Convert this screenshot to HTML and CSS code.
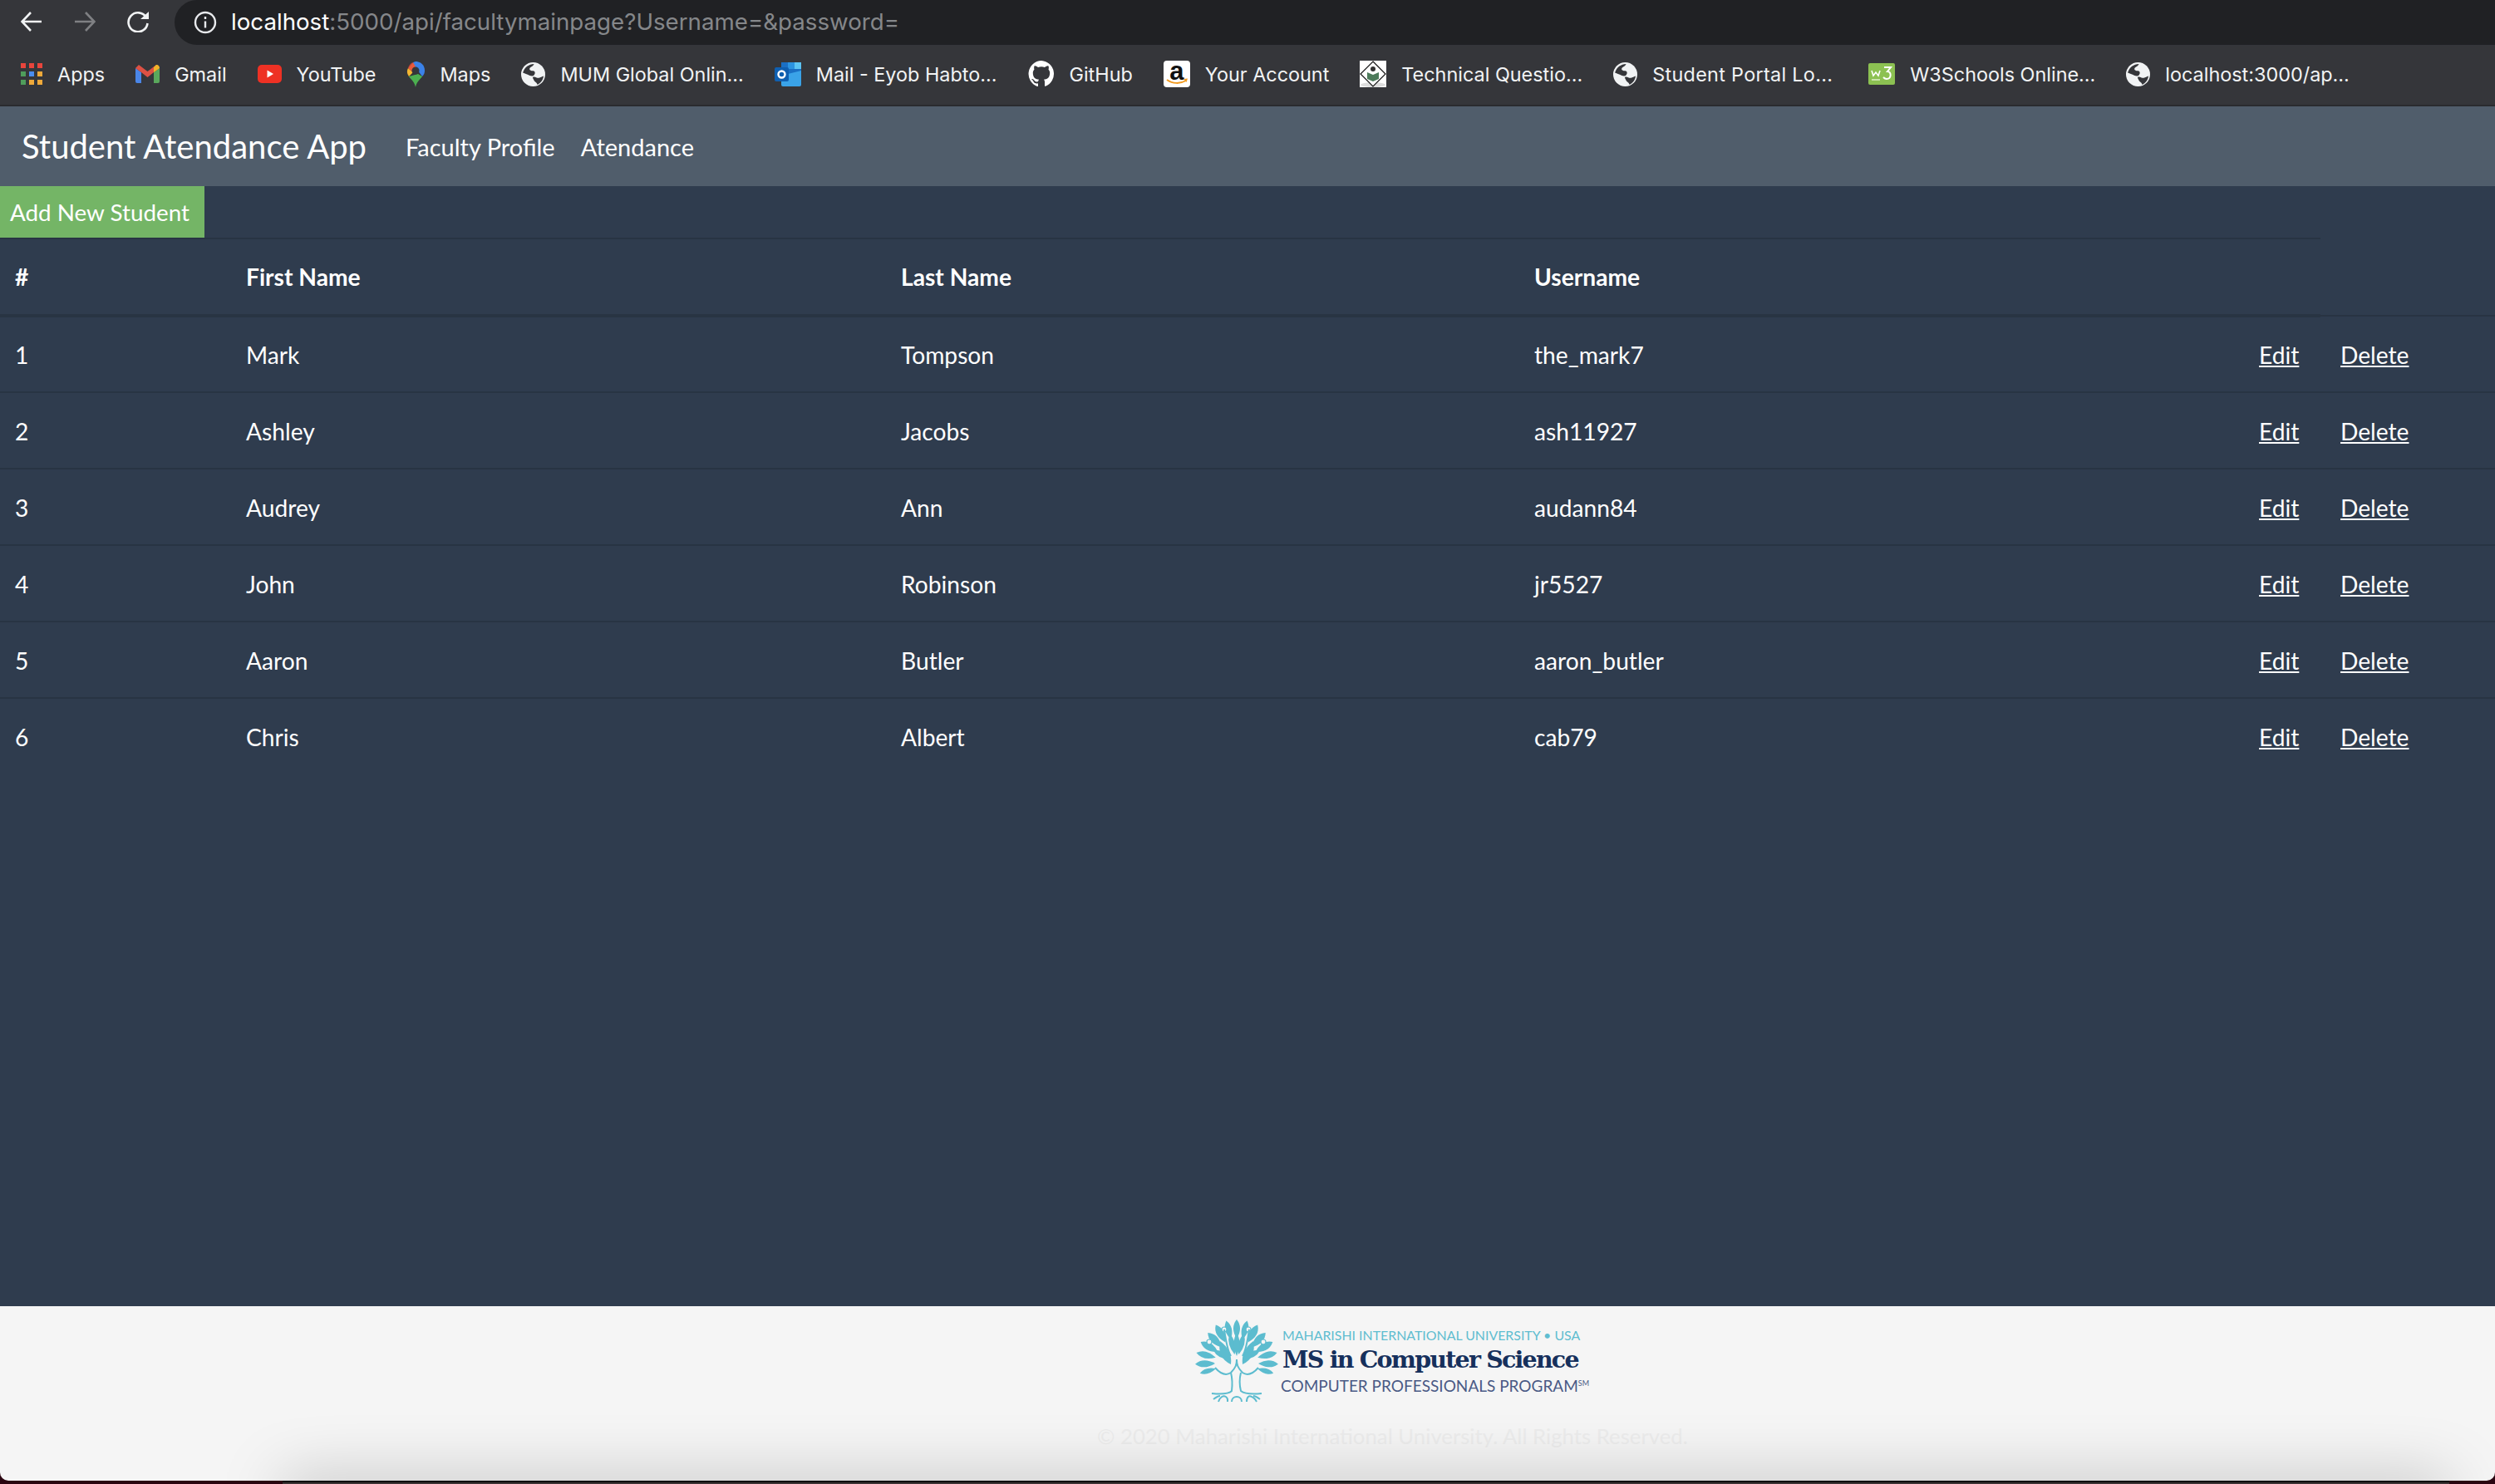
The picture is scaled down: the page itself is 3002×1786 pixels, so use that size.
FILE: index.html
```html
<!DOCTYPE html>
<html lang="en">
<head>
<meta charset="UTF-8">
<title>Student Atendance App</title>
<link rel="stylesheet" href="styles.css">
</head>
<body>
<div class="toolbar">
  <div class="nav-buttons">
    <svg class="tool-icon" viewBox="0 0 26 26"><path d="M25 13H2M12 2 1.5 13 12 24"/></svg>
    <svg class="tool-icon dim" viewBox="0 0 26 26"><path d="M1 13h23M14 2l10.500 11L14 24"/></svg>
    <svg class="tool-icon reload" viewBox="0 0 28 26"><path d="M23 8a11.500 11.500 0 1 0 1.500 7"/><path class="solid" d="M16 10 26 1v9z"/></svg>
  </div>
  <div class="address">
    <svg class="info-icon" viewBox="0 0 28 28"><circle cx="14" cy="14" r="12"/><path d="M14 12.500v8M14 7v3"/></svg>
    <span class="url">localhost<span class="url-rest">:5000/api/facultymainpage?Username=&amp;password=</span></span>
  </div>
</div>

<div class="bookmarks">
  <div class="bookmark">
    <svg class="bm-icon apps" viewBox="0 0 26 27">
      <rect x="0" y="0" width="6" height="6" fill="#e8453c"/><rect x="10" y="0" width="6" height="6" fill="#e8453c"/><rect x="20" y="0" width="6" height="6" fill="#e8453c"/>
      <rect x="0" y="10" width="6" height="6" fill="#4f9d5b"/><rect x="10" y="10" width="6" height="6" fill="#4a8df0"/><rect x="20" y="10" width="6" height="6" fill="#eea93a"/>
      <rect x="0" y="20" width="6" height="6" fill="#4f9d5b"/><rect x="10" y="20" width="6" height="6" fill="#eea93a"/><rect x="20" y="20" width="6" height="6" fill="#eea93a"/>
    </svg>
    <span>Apps</span>
  </div>
  <div class="bookmark">
    <svg class="bm-icon gmail" viewBox="0 0 29 22">
      <path fill="#4a86e8" d="M0 4v16a2 2 0 0 0 2 2h5V9z"/>
      <path fill="#5aa85c" d="M29 4v16a2 2 0 0 1-2 2h-5V9z"/>
      <path fill="#dd5144" d="M0 4l7 5 7.500 6L22 9l7-5-4-4-10.500 8L4 0z"/>
      <path fill="#f0b429" d="M22 3l3-3c2-.5 4 1.500 4 4l-7 5z"/>
    </svg>
    <span>Gmail</span>
  </div>
  <div class="bookmark">
    <svg class="bm-icon youtube" viewBox="0 0 29 22">
      <rect width="29" height="22" rx="5" fill="#ee3124"/>
      <path fill="#fff" d="M11.500 6.500 19 11l-7.500 4.500z"/>
    </svg>
    <span>YouTube</span>
  </div>
  <div class="bookmark">
    <svg class="bm-icon maps" viewBox="0 0 22 31">
      <path fill="#4caf50" d="M3 18c3 4 7 7 8 13 1-6 5-9 8-13z"/>
      <path fill="#f4b731" d="M2 8 8 13l-5 5C1 15 0 12 2 8z"/>
      <path fill="#db4437" d="M2 8 8 1c-3 1-5 4-6 7z"/>
      <path fill="#e85a3c" d="M2 8l6 5 5-9-5-3z"/>
      <path fill="#3b82e8" d="M11 0c6 0 11 4 11 11 0 3-1 5-3 7l-6-8-5-9z"/>
      <path fill="#4caf50" d="M3 18 14 15l5 3-8 7z"/>
      <circle cx="11" cy="11" r="4.500" fill="#35363a"/>
    </svg>
    <span>Maps</span>
  </div>
  <div class="bookmark">
    <svg class="bm-icon globe" viewBox="0 0 28 28"><use href="#globe-shape"/></svg>
    <span>MUM Global Onlin...</span>
  </div>
  <div class="bookmark">
    <svg class="bm-icon outlook" viewBox="0 0 32 29">
      <path fill="#1a6fc4" d="M8 0h24v16H8z"/>
      <path fill="#5cc4f2" d="M24 0h8v8h-8z"/>
      <path fill="#2b93e0" d="M16 0h8v8h-8z"/>
      <path fill="#3aa3e8" d="M8 16l24-6v17a2 2 0 0 1-2 2H10a2 2 0 0 1-2-2z"/>
      <rect x="0" y="6" width="17" height="17" rx="2" fill="#0f5fb0"/>
      <circle cx="8.500" cy="14.500" r="4" fill="none" stroke="#fff" stroke-width="2.400"/>
    </svg>
    <span>Mail - Eyob Habto...</span>
  </div>
  <div class="bookmark">
    <svg class="bm-icon github" viewBox="0 0 32 32">
      <path fill="#fff" d="M16 0a16 16 0 0 0-5 31c.8.100 1-.3 1-.8v-3c-4.500 1-5.400-2-5.400-2-.7-1.800-1.800-2.300-1.800-2.300-1.400-1 .1-1 .1-1 1.600.1 2.500 1.700 2.500 1.700 1.400 2.500 3.800 1.800 4.700 1.400.1-1 .6-1.800 1-2.200-3.600-.4-7.300-1.800-7.300-8 0-1.800.6-3.200 1.700-4.300-.2-.4-.7-2 .1-4.300 0 0 1.400-.4 4.400 1.700a15 15 0 0 1 8 0c3-2.100 4.400-1.700 4.400-1.700.9 2.300.3 3.900.1 4.300 1 1.100 1.700 2.500 1.700 4.300 0 6.200-3.700 7.600-7.300 8 .6.500 1.100 1.400 1.100 2.900v4.300c0 .5.200.9 1 .8A16 16 0 0 0 16 0z"/>
    </svg>
    <span>GitHub</span>
  </div>
  <div class="bookmark">
    <div class="amazon">
      <span class="amazon-a">a</span>
      <svg class="amazon-smile" viewBox="0 0 32 32">
        <path d="M4 23c7 5 16 5 23 1" fill="none" stroke="#f29a1f" stroke-width="2"/>
        <path d="M24 22l5-.5-1.500 4.500z" fill="#f29a1f"/>
      </svg>
    </div>
    <span>Your Account</span>
  </div>
  <div class="bookmark">
    <svg class="bm-icon tech" viewBox="0 0 32 32">
      <rect width="32" height="32" fill="#fff"/>
      <ellipse cx="16" cy="29" rx="15" ry="3" fill="#ddd"/>
      <path d="M16 1 31 16 16 31 1 16z" fill="#fff" stroke="#111" stroke-width="1.200"/>
      <path d="M9 14l7 3 7-3v8l-7 3-7-3z" fill="#4c7a5a"/>
      <circle cx="16" cy="10" r="3" fill="#333"/>
    </svg>
    <span>Technical Questio...</span>
  </div>
  <div class="bookmark">
    <svg class="bm-icon globe" viewBox="0 0 28 28"><use href="#globe-shape"/></svg>
    <span class="portal">Student Portal Lo...</span>
  </div>
  <div class="bookmark w3-item">
    <svg class="bm-icon w3" viewBox="0 0 32 26">
      <rect width="32" height="26" rx="2" fill="#8cc152"/>
      <path d="M4 9l2 6 3-4 3 4 2-6" fill="none" stroke="#fff" stroke-width="1.600"/>
      <path d="M19 5h8l-4 5c5 0 5 9-1 9-2 0-3-1-4-2" fill="none" stroke="#fff" stroke-width="2"/>
      <path d="M4 20h10" stroke="#dfeecb" stroke-width="1.500"/>
    </svg>
    <span>W3Schools Online...</span>
  </div>
  <div class="bookmark">
    <svg class="bm-icon globe" viewBox="0 0 28 28"><use href="#globe-shape"/></svg>
    <span>localhost:3000/ap...</span>
  </div>
</div>

<svg class="defs">
  <symbol id="globe-shape" viewBox="0 0 28 28">
    <circle cx="14" cy="14" r="14" fill="#f1f3f4"/>
    <path fill="#35363a" d="M2 12C4 6 9 2 15 2c-1 3-4 3-5 5s2 3 4 3 3 3 1 5-6 0-8-1-3-1-5-2zM14 17c3-1 4 2 7 1s3-1 5-2c0 4-3 8-7 10-1-3-3-3-4-5s-2-3-1-4z"/>
  </symbol>
</svg>

<nav class="navbar">
  <a class="brand">Student Atendance App</a>
  <a class="nav-link">Faculty Profile</a>
  <a class="nav-link">Atendance</a>
</nav>

<main class="content">
  <button class="add-btn">Add New Student</button>
  <table class="students">
    <colgroup>
      <col class="c-num"><col class="c-first"><col class="c-last"><col class="c-user"><col class="c-edit"><col class="c-del">
    </colgroup>
    <thead>
      <tr><th>#</th><th>First Name</th><th>Last Name</th><th>Username</th><th></th><th class="no-line"></th></tr>
    </thead>
    <tbody>
      <tr><td>1</td><td>Mark</td><td>Tompson</td><td>the_mark7</td><td><a href="#">Edit</a></td><td class="del"><a href="#">Delete</a></td></tr>
      <tr><td>2</td><td>Ashley</td><td>Jacobs</td><td>ash11927</td><td><a href="#">Edit</a></td><td class="del"><a href="#">Delete</a></td></tr>
      <tr><td>3</td><td>Audrey</td><td>Ann</td><td>audann84</td><td><a href="#">Edit</a></td><td class="del"><a href="#">Delete</a></td></tr>
      <tr><td>4</td><td>John</td><td>Robinson</td><td>jr5527</td><td><a href="#">Edit</a></td><td class="del"><a href="#">Delete</a></td></tr>
      <tr><td>5</td><td>Aaron</td><td>Butler</td><td>aaron_butler</td><td><a href="#">Edit</a></td><td class="del"><a href="#">Delete</a></td></tr>
      <tr><td>6</td><td>Chris</td><td>Albert</td><td>cab79</td><td><a href="#">Edit</a></td><td class="del"><a href="#">Delete</a></td></tr>
    </tbody>
  </table>
</main>

<footer class="footer">
  <div class="logo">
    <svg class="tree" viewBox="0 0 120 112">
      <g fill="#5cbccf">
        <path d="M58 8q8 10 0 23q-8-13 0-23z"/>
        <path d="M58 8q8 10 0 23q-8-13 0-23z" transform="rotate(-14 58 60)"/>
        <path d="M58 8q8 10 0 23q-8-13 0-23z" transform="rotate(14 58 60)"/>
        <path d="M58 8q9 10 0 24q-9-14 0-24z" transform="rotate(-29 58 60)"/>
        <path d="M58 8q9 10 0 24q-9-14 0-24z" transform="rotate(29 58 60)"/>
        <path d="M58 10q9 10 0 24q-9-14 0-24z" transform="rotate(-44 58 60)"/>
        <path d="M58 10q9 10 0 24q-9-14 0-24z" transform="rotate(44 58 60)"/>
        <path d="M58 10q9 10 0 24q-9-14 0-24z" transform="rotate(-60 58 60)"/>
        <path d="M58 10q9 10 0 24q-9-14 0-24z" transform="rotate(60 58 60)"/>
        <path d="M58 10q8 10 0 24q-8-14 0-24z" transform="rotate(-76 58 60)"/>
        <path d="M58 10q8 10 0 24q-8-14 0-24z" transform="rotate(76 58 60)"/>
        <path d="M58 10q8 10 0 24q-8-14 0-24z" transform="rotate(-92 58 60)"/>
        <path d="M58 10q8 10 0 24q-8-14 0-24z" transform="rotate(92 58 60)"/>
        <path d="M58 14q6 8 0 20q-6-12 0-20z" transform="rotate(-106 58 60)"/>
        <path d="M58 14q6 8 0 20q-6-12 0-20z" transform="rotate(106 58 60)"/>
        <path d="M58 24q7 12 0 26q-7-14 0-26z" transform="rotate(-14 58 60)"/>
        <path d="M58 24q7 12 0 26q-7-14 0-26z" transform="rotate(14 58 60)"/>
        <path d="M58 24q7 12 0 28q-7-16 0-28z"/>
        <path d="M58 28q7 10 0 24q-7-14 0-24z" transform="rotate(-62 58 60)"/>
        <path d="M58 28q7 10 0 24q-7-14 0-24z" transform="rotate(62 58 60)"/>
        <path d="M38 34q15 11 13 28q-17-8-13-28z"/>
        <path d="M78 34q-15 11-13 28q17-8 13-28z"/>
      </g>
      <g class="tree-rings">
        <circle cx="25" cy="35" r="3"/><circle cx="43" cy="20" r="3"/><circle cx="72" cy="20" r="3"/><circle cx="90" cy="35" r="3"/>
      </g>
      <g class="tree-lines">
        <path d="M58 56c0 6-1 10-7 16-6 4-12 2-19-6"/>
        <path d="M58 56c0 6 1 10 7 16 6 4 12 2 19-6"/>
        <path d="M43 20c2 14 4 26 8 32M73 20c-2 14-4 26-8 32"/>
        <path d="M51 72c2 8 2 14 1 22-4 4-14 4-24 3"/>
        <path d="M63 72c-2 8-2 14 0 22 5 4 15 4 25 3"/>
        <path d="M36 107c2-6 6-8 9-6 3 2 2 5 2 6M52 107c0-4 3-6 6-6s6 2 6 6M70 107c0-6 3-8 6-6 3 1 5 4 6 6"/>
        <path d="M30 104c4-3 6-4 8-4M86 104c-4-3-6-4-8-4"/>
      </g>
    </svg>
    <div class="logo-text">
      <div class="logo-uni">MAHARISHI INTERNATIONAL UNIVERSITY • USA</div>
      <div class="logo-title">MS in Computer Science</div>
      <div class="logo-sub">COMPUTER PROFESSIONALS PROGRAM<sup>SM</sup></div>
    </div>
  </div>
  <p class="copyright">© 2020 Maharishi International University. All Rights Reserved.</p>
  <div class="footer-shade"></div>
</footer>
<div class="bottom-edge"></div>
</body>
</html>
```

FILE: styles.css
```css
* {
    box-sizing: border-box;
}
html, body {
    margin: 0;
    height: 100%;
}
body {
    display: flex;
    flex-direction: column;
    height: 1786px;
    overflow: hidden;
    background-color: #2a0510;
    font-family: Lato, sans-serif;
    color: #fff;
}
.defs {
    display: none;
}

/* browser chrome */
.toolbar {
    display: flex;
    height: 54px;
    background-color: #35363a;
    flex-shrink: 0;
}
.nav-buttons {
    display: flex;
    align-items: flex-start;
    gap: 38px;
    width: 210px;
    padding: 13px 0 0 25px;
}
.tool-icon {
    width: 26px;
    height: 26px;
    fill: none;
    stroke: #f1f3f4;
    stroke-width: 2.600;
}
.tool-icon.dim {
    stroke: #7f8083;
}
.tool-icon.reload {
    width: 28px;
}
.tool-icon .solid {
    fill: #f1f3f4;
    stroke: none;
}
.address {
    flex: 1;
    display: flex;
    align-items: center;
    gap: 17px;
    padding-left: 23px;
    background-color: #202124;
    border-radius: 27px 0 0 27px;
}
.info-icon {
    width: 28px;
    height: 28px;
    fill: none;
    stroke: #e8eaed;
    stroke-width: 2.400;
}
.url {
    font-family: Inter, sans-serif;
    font-size: 27.700px;
    color: #fff;
    padding-bottom: 2px;
}
.url-rest {
    color: #85878a;
}
.bookmarks {
    display: flex;
    align-items: center;
    gap: 37px;
    height: 74px;
    padding: 0 0 2px 25px;
    background-color: #35363a;
    border-bottom: 2px solid #2a2b2e;
    flex-shrink: 0;
    font-family: Inter, sans-serif;
    font-size: 23.400px;
    color: #f1f3f4;
}
.bookmark {
    display: flex;
    align-items: center;
    gap: 18px;
    white-space: nowrap;
}
.portal {
    letter-spacing: 0.300px;
}
.w3-item {
    margin-left: 6px;
}
.bm-icon {
    display: block;
    height: 29px;
    width: 29px;
}
.apps {
    width: 26px;
    height: 27px;
}
.gmail, .youtube {
    height: 22px;
}
.maps {
    width: 22px;
    height: 31px;
}
.outlook {
    width: 32px;
}
.github, .tech {
    width: 32px;
    height: 32px;
}
.w3 {
    width: 32px;
    height: 26px;
}
.amazon {
    position: relative;
    width: 32px;
    height: 32px;
    background-color: #fff;
    border-radius: 4px;
    text-align: center;
}
.amazon-a {
    display: block;
    font-family: "Liberation Sans", sans-serif;
    font-size: 31px;
    font-weight: bold;
    line-height: 26px;
    color: #111;
}
.amazon-smile {
    position: absolute;
    left: 0;
    top: 0;
    width: 32px;
    height: 32px;
}

/* page */
.navbar {
    display: flex;
    align-items: center;
    height: 96px;
    padding-left: 26px;
    background-color: #505d6b;
    flex-shrink: 0;
}
.brand {
    font-size: 40px;
    margin-right: 47px;
}
.nav-link {
    font-size: 29px;
    margin-right: 31px;
}
.content {
    flex: 1;
    background-color: #2f3c4e;
}
.add-btn {
    display: block;
    width: 246px;
    height: 62px;
    padding: 0 0 0 12px;
    border: none;
    background-color: #74b566;
    color: #fff;
    font-family: Lato, sans-serif;
    font-size: 27.800px;
    text-align: left;
}
.students {
    width: 3002px;
    table-layout: fixed;
    border-collapse: collapse;
    font-size: 28.200px;
}
.c-num { width: 277px; }
.c-first { width: 788px; }
.c-last { width: 762px; }
.c-user { width: 872px; }
.c-edit { width: 93px; }
.c-del { width: 210px; }
.students th {
    height: 93px;
    padding: 0 19px;
    text-align: left;
    font-weight: bold;
    border-top: 2px solid #283443;
    border-bottom: 4px solid #283443;
}
.students th.no-line {
    border: none;
}
.students td {
    height: 92px;
    padding: 1px 19px 0;
    border-top: 2px solid #283443;
}
.students th:first-child, .students td:first-child {
    padding-left: 18px;
}
.students td.del {
    padding-left: 24px;
}
.students a {
    color: #fff;
}

/* footer */
.footer {
    position: relative;
    height: 210px;
    flex-shrink: 0;
    overflow: hidden;
    background-color: #f5f5f5;
    border-radius: 0 0 10px 10px;
    padding: 8px 0 0 1430px;
}
.logo {
    display: flex;
    align-items: flex-start;
}
.tree {
    width: 120px;
    height: 112px;
    flex-shrink: 0;
}
.tree-lines {
    fill: none;
    stroke: #5cbccf;
    stroke-width: 2;
}
.tree-rings {
    fill: #f5f5f5;
    stroke: #5cbccf;
    stroke-width: 1.200;
}
.logo-text {
    margin-left: -7px;
    padding-top: 16px;
}
.logo-uni {
    font-size: 15.900px;
    line-height: 22px;
    color: #5fbdd0;
    white-space: nowrap;
}
.logo-title {
    font-family: "DejaVu Serif", serif;
    font-size: 28.500px;
    font-weight: bold;
    letter-spacing: -1.800px;
    line-height: 36px;
    color: #16305c;
    white-space: nowrap;
}
.logo-sub {
    font-size: 19px;
    line-height: 28px;
    margin-left: -2px;
    color: #4a5a85;
    white-space: nowrap;
}
.logo-sub sup {
    font-size: 9px;
    line-height: 0;
}
.copyright {
    margin: 0 0 0 -110px;
    padding-top: 21px;
    font-size: 25.750px;
    color: #ececec;
    white-space: nowrap;
}
.footer-shade {
    position: absolute;
    left: 340px;
    right: 55px;
    bottom: -40px;
    height: 40px;
    box-shadow: 0 0 76px rgba(0, 0, 0, 0.26);
}
.bottom-edge {
    height: 4px;
    flex-shrink: 0;
    margin: 0 55px 0 340px;
    border-top: 2px solid #000;
    background-color: #3a3333;
}
```
